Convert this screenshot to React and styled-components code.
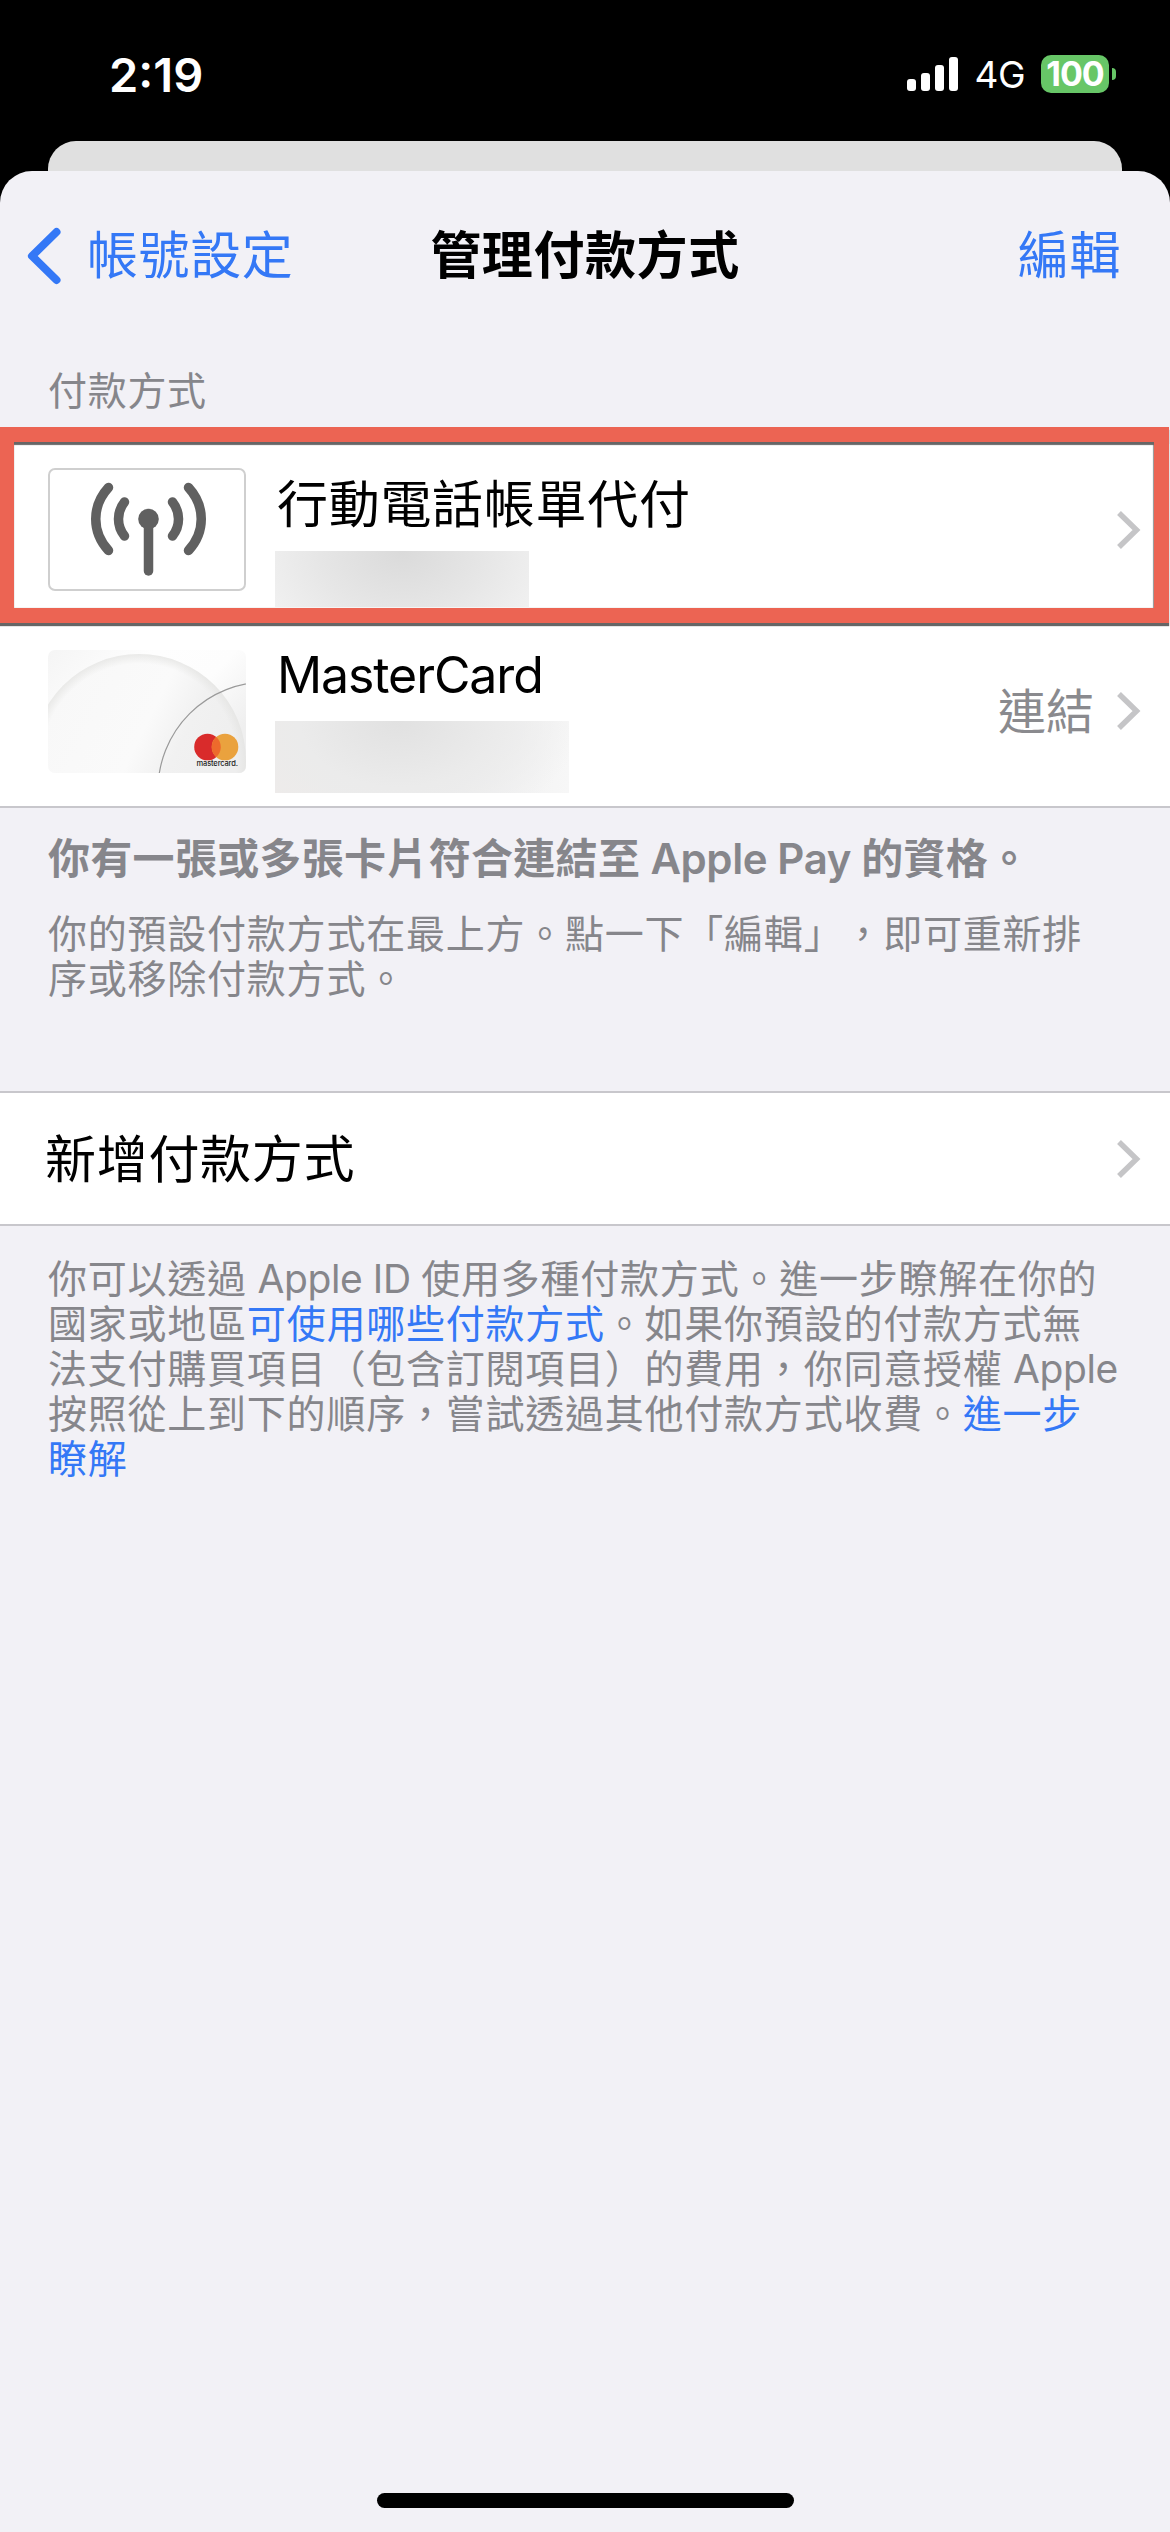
import React from 'react';
import styled, { createGlobalStyle } from 'styled-components';

const GlobalStyle = createGlobalStyle`
  * {
    box-sizing: border-box;
  }

  body {
    margin: 0;
    background: #000;
    font-family: Inter, 'Noto Sans CJK TC', sans-serif;
    text-spacing-trim: space-all;
  }

  h1, h2, p {
    margin: 0;
    font-weight: 400;
  }
`;

const Screen = styled.div`
  display: flex;
  flex-direction: column;
  width: 1170px;
  height: 2532px;
  overflow: hidden;
  background: #000;
`;

const StatusBar = styled.div`
  display: flex;
  align-items: center;
  height: 141px;
  padding: 7px 54px 0 109px;
  color: #fff;
`;

const Clock = styled.div`
  margin-right: auto;
  font-size: 47px;
  font-weight: 600;
`;

const Signal = styled.div`
  display: flex;
  align-items: flex-end;
  gap: 5px;
  height: 34px;
`;

const Bar = styled.span`
  width: 9px;
  height: ${props => props.h}px;
  border-radius: 3px;
  background: #fff;
`;

const Network = styled.div`
  margin-left: 16px;
  padding-top: 2px;
  font-size: 37px;
  line-height: 38px;
  letter-spacing: -0.5px;
`;

const Battery = styled.div`
  width: 68px;
  height: 38px;
  margin-left: 16px;
  border-radius: 10px;
  background: #67c667;
  font-size: 34px;
  font-weight: 700;
  line-height: 38px;
  text-align: center;
  letter-spacing: -1px;
`;

const BatteryCap = styled.span`
  width: 4px;
  height: 12px;
  margin-left: 3px;
  border-radius: 0 4px 4px 0;
  background: #67c667;
`;

const BackSheet = styled.div`
  flex: none;
  height: 30px;
  margin: 0 48px;
  border-radius: 28px 28px 0 0;
  background: #e0e0e0;
`;

const Sheet = styled.main`
  display: flex;
  flex: 1;
  flex-direction: column;
  border-radius: 32px 32px 0 0;
  background: #f2f1f6;
`;

const NavBar = styled.header`
  display: grid;
  grid-template-columns: 1fr auto 1fr;
  align-items: center;
  height: 168px;
  padding: 2px 0 0;
  font-size: 51px;
  line-height: 60px;
  letter-spacing: 0.6px;
`;

const NavLink = styled.a`
  display: flex;
  align-items: center;
  gap: 26px;
  justify-self: ${props => (props.end ? 'end' : 'start')};
  margin: 0 ${props => (props.end ? 49 : 0)}px 0 ${props => (props.end ? 0 : 27)}px;
  color: #3478f6;
`;

const Title = styled.h1`
  font-size: 51px;
  font-weight: 700;
`;

const SectionLabel = styled.h2`
  height: 105px;
  padding: 24px 48px 0;
  color: #86868b;
  font-size: 39px;
  line-height: 56px;
  letter-spacing: 0.7px;
`;

const List = styled.div`
  position: relative;
  border-bottom: 2px solid #c8c7cc;
  border-top: ${props => (props.topLine ? '2px solid #c8c7cc' : 'none')};
  background: #fff;
`;

const Row = styled.div`
  display: flex;
  align-items: center;
  height: ${props => props.h}px;
  padding: 0 29px 0 ${props => props.left || 48}px;
`;

const RowTitle = styled.div`
  padding-top: 3px;
  font-size: 51px;
  line-height: 60px;
  letter-spacing: 0.7px;
`;

const LatinRowTitle = styled(RowTitle)`
  padding-top: 0;
  font-size: 50px;
  letter-spacing: -1.1px;
`;

const Details = styled.div`
  display: flex;
  flex-direction: column;
  align-self: flex-start;
  gap: ${props => props.gap}px;
  padding-top: ${props => props.top}px;
  margin-left: 29px;

  ${RowTitle} {
    padding-left: 2px;
  }
`;

const Redacted = styled.div`
  width: ${props => props.w}px;
  height: ${props => props.h}px;
  background: ${props => props.fill};
`;

const Action = styled.div`
  display: flex;
  align-items: center;
  gap: 22px;
  margin-left: auto;
  color: #8a8a8e;
  font-size: 48px;
  line-height: 60px;
`;

const ActionLabel = styled.span`
  padding-top: 2px;
`;

const CarrierCard = styled.div`
  display: flex;
  flex: none;
  width: 198px;
  height: 123px;
  margin-bottom: 1px;
  border: 2px solid #cfcfcf;
  border-radius: 7px;
`;

// Marks the row being explained, drawn over the list
const Highlight = styled.div`
  position: absolute;
  top: -17px;
  left: 0;
  width: 1169px;
  height: 196px;
  border: 15px solid #ec6453;
  border-left-width: 14px;
  box-shadow: 0 3px 1px #666, inset 0 3px 1px #666, inset -1px 0 1px #999;
`;

const Note = styled.p`
  padding: ${props => props.top}px 0 0 48px;
  color: #86868b;
  font-size: 39px;
  font-weight: 400;
  line-height: 45px;
  letter-spacing: 0.77px;
  white-space: nowrap;

  a {
    color: #3478f6;
  }
`;

const StrongNote = styled(Note)`
  font-size: 42px;
  font-weight: 600;
  line-height: 60px;
  letter-spacing: 0.3px;
`;

const Latin = styled.span`
  letter-spacing: -0.4px;
`;

const Spacer = styled.div`
  height: ${props => props.h}px;
`;

const HomeIndicator = styled.div`
  width: 417px;
  height: 15px;
  margin: auto auto 24px;
  border-radius: 8px;
  background: #000;
`;

const BackIcon = () => (
  <svg width="34" height="58" viewBox="0 0 34 58" fill="none">
    <path
      d="M29.500 5 L5 29 L29.500 53"
      stroke="#3478f6"
      strokeWidth="8"
      strokeLinecap="round"
      strokeLinejoin="round"
    />
  </svg>
);

const Chevron = () => (
  <svg width="25" height="40" viewBox="0 0 25 40" fill="none">
    <path d="M3 3 L20.5 20 L3 37" stroke="#c5c5c7" strokeWidth="5.5" />
  </svg>
);

const AntennaIcon = () => (
  <svg width="194" height="119" viewBox="0 0 194 119" fill="none">
    <g stroke="#606060" strokeWidth="9.5" strokeLinecap="round">
      <path d="M98.500 50 V101" />
      <path d="M58.500 17.500 C41.500 36 41.500 62 58.500 80.500" />
      <path d="M138.500 17.500 C155.500 36 155.500 62 138.500 80.500" />
      <path d="M74.500 32 C66.500 42 66.500 56 74.500 66" />
      <path d="M122.500 32 C130.500 42 130.500 56 122.500 66" />
    </g>
    <circle cx="98.500" cy="49" r="10.300" fill="#606060" />
  </svg>
);

const MastercardArt = () => (
  <svg width="198" height="123" viewBox="0 0 198 123">
    <defs>
      <linearGradient id="plate" x1="0" y1="0" x2="1" y2="0.6">
        <stop offset="0" stopColor="#f5f5f5" />
        <stop offset="0.4" stopColor="#fefefe" />
        <stop offset="0.7" stopColor="#fdfdfd" />
        <stop offset="1" stopColor="#efefef" />
      </linearGradient>
      <linearGradient id="disc" x1="0.1" y1="0.2" x2="0.9" y2="0.6">
        <stop offset="0" stopColor="#f8f8f8" />
        <stop offset="0.5" stopColor="#fafafa" />
        <stop offset="0.7" stopColor="#f1f1f1" />
        <stop offset="1" stopColor="#eeeeee" />
      </linearGradient>
      <radialGradient id="rim">
        <stop offset="0.91" stopColor="#e3e3e1" stopOpacity="0" />
        <stop offset="1" stopColor="#e3e3e1" stopOpacity="0.7" />
      </radialGradient>
      <clipPath id="card">
        <rect width="198" height="123" rx="7" />
      </clipPath>
    </defs>
    <g clipPath="url(#card)">
      <rect width="198" height="123" fill="url(#plate)" />
      <circle cx="91" cy="111" r="107" fill="url(#disc)" />
      <circle cx="91" cy="111" r="107" fill="url(#rim)" />
      <circle cx="218" cy="140" r="108" fill="none" stroke="#9a9a9a" strokeWidth="1.200" />
    </g>
    <circle cx="159.500" cy="97" r="13.300" fill="#d92b2b" />
    <circle cx="177" cy="97" r="13.300" fill="#eaa23e" />
    <path d="M168.250 87 A13.300 13.300 0 0 1 168.250 107 A13.300 13.300 0 0 1 168.250 87 Z" fill="#ed6a2c" />
    <text x="148.500" y="116" fontSize="7.500" fontWeight="500" textLength="41.500" fill="#222">
      mastercard.
    </text>
  </svg>
);

const App = () => (
  <Screen>
    <GlobalStyle />
    <StatusBar>
      <Clock>2:19</Clock>
      <Signal>
        <Bar h={12} />
        <Bar h={18} />
        <Bar h={26} />
        <Bar h={34} />
      </Signal>
      <Network>4G</Network>
      <Battery>100</Battery>
      <BatteryCap />
    </StatusBar>
    <BackSheet />
    <Sheet>
      <NavBar>
        <NavLink>
          <BackIcon />
          帳號設定
        </NavLink>
        <Title>管理付款方式</Title>
        <NavLink end>編輯</NavLink>
      </NavBar>
      <SectionLabel>付款方式</SectionLabel>
      <List>
        <Row h={172}>
          <CarrierCard>
            <AntennaIcon />
          </CarrierCard>
          <Details top={28} gap={16}>
            <RowTitle>行動電話帳單代付</RowTitle>
            <Redacted
              w={254}
              h={56}
              fill="radial-gradient(ellipse 150px 110px at 50% 0, #dadada, #e6e6e6 55%, #f1f1f1)"
            />
          </Details>
          <Action>
            <Chevron />
          </Action>
        </Row>
        <Row h={190}>
          <MastercardArt />
          <Details top={29} gap={16}>
            <LatinRowTitle>MasterCard</LatinRowTitle>
            <Redacted
              w={294}
              h={72}
              fill="radial-gradient(ellipse 180px 120px at 42% 0, #e1e1e1, #ebebeb 55%, rgba(235, 235, 235, 0)), linear-gradient(90deg, #eeebea, #ececed 50%, #f7f7f7)"
            />
          </Details>
          <Action>
            <ActionLabel>連結</ActionLabel>
            <Chevron />
          </Action>
        </Row>
        <Highlight />
      </List>
      <StrongNote top={21}>
        你有一張或多張卡片符合連結至<Latin> Apple Pay </Latin>的資格。
      </StrongNote>
      <Note top={22}>
        你的預設付款方式在最上方。點一下「編輯」，即可重新排
        <br />
        序或移除付款方式。
      </Note>
      <Spacer h={90} />
      <List topLine>
        <Row h={131} left={45}>
          <RowTitle>新增付款方式</RowTitle>
          <Action>
            <Chevron />
          </Action>
        </Row>
      </List>
      <Note top={30}>
        你可以透過<Latin> Apple ID </Latin>使用多種付款方式。進一步瞭解在你的
        <br />
        國家或地區<a>可使用哪些付款方式</a>。如果你預設的付款方式無
        <br />
        法支付購買項目（包含訂閱項目）的費用，你同意授權<Latin> Apple</Latin>
        <br />
        按照從上到下的順序，嘗試透過其他付款方式收費。<a>進一步</a>
        <br />
        <a>瞭解</a>
      </Note>
      <HomeIndicator />
    </Sheet>
  </Screen>
);

export default App;
